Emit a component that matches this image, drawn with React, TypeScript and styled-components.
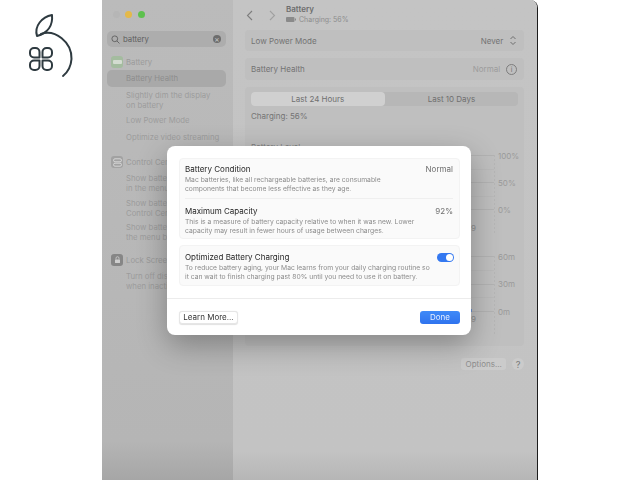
import React from 'react';
import styled, { createGlobalStyle } from 'styled-components';

const GlobalStyle = createGlobalStyle`
  html, body {
    margin: 0;
    padding: 0;
    width: 640px;
    height: 480px;
    overflow: hidden;
    background: #fff;
    font-family: Inter, "Liberation Sans", sans-serif;
  }
  * { box-sizing: border-box; }
`;

const sidebarGroups = [
  {
    title: 'Battery',
    tint: '#a4bc9f',
    glyph: 'battery',
    items: [
      { label: 'Battery Health', active: true },
      { label: 'Slightly dim the display\non battery' },
      { label: 'Low Power Mode' },
      { label: 'Optimize video streaming' },
    ],
  },
  {
    title: 'Control Center',
    tint: '#a2a2a2',
    glyph: 'control',
    items: [
      { label: 'Show battery\nin the menu bar' },
      { label: 'Show battery\nControl Center' },
      { label: 'Show battery\nthe menu bar' },
    ],
  },
  {
    title: 'Lock Screen',
    tint: '#868686',
    glyph: 'lock',
    items: [{ label: 'Turn off display\nwhen inactive' }],
  },
];

export default function App() {
  return (
    <Page>
      <GlobalStyle />
      <Gutter>
        <Logo viewBox="0 0 102 100" aria-label="logo">
          <path d="M37 36C34 26 42 17 52 15C53 25 48 33 37 36Z" />
          <path d="M41 34C55 29 72 42 71.500 59C71 66 68 72 63 76" />
          <path d="M39.500 57.500H34a4 4 0 0 1-4-4v-1.500a4 4 0 0 1 4-4h1.500a4 4 0 0 1 4 4Z" />
          <path d="M42.500 57.500H48a4 4 0 0 0 4-4v-1.500a4 4 0 0 0-4-4h-1.500a4 4 0 0 0-4 4Z" />
          <path d="M39.500 60.500H34a4 4 0 0 0-4 4v1.500a4 4 0 0 0 4 4h1.500a4 4 0 0 0 4-4Z" />
          <path d="M42.500 60.500H48a4 4 0 0 1 4 4v1.500a4 4 0 0 1-4 4h-1.500a4 4 0 0 1-4-4Z" />
        </Logo>
      </Gutter>
      <Window>
        <Sidebar>
          <Traffic>
            <Light $color="#b6b6b6" />
            <Light $color="#e4b949" />
            <Light $color="#5dc14e" />
          </Traffic>
          <Search>
            <svg width="9" height="9" viewBox="0 0 10 10" fill="none" stroke="#606060" strokeWidth="1">
              <circle cx="4.200" cy="4.200" r="3.200" />
              <path d="M6.600 6.600L9.400 9.400" />
            </svg>
            <SearchText>battery</SearchText>
            <ClearDot>×</ClearDot>
          </Search>
          {sidebarGroups.map((group) => (
            <SideGroup key={group.title}>
              <SideHead>
                <SideIcon $tint={group.tint}>
                  {group.glyph === 'battery' && <BatteryBar />}
                  {group.glyph === 'control' && (
                    <svg width="9" height="9" viewBox="0 0 9 9" fill="none" stroke="#d6d6d6" strokeWidth="1">
                      <rect x="0.500" y="0.800" width="8" height="3" rx="1.500" />
                      <rect x="0.500" y="5.200" width="8" height="3" rx="1.500" />
                    </svg>
                  )}
                  {group.glyph === 'lock' && (
                    <svg width="9" height="9" viewBox="0 0 9 9">
                      <path d="M3 3.500V2.200a1.500 1.500 0 0 1 3 0V3.500" fill="none" stroke="#cfcfcf" strokeWidth="0.800" />
                      <rect x="2" y="3.500" width="5" height="3.500" rx="0.600" fill="#cfcfcf" />
                    </svg>
                  )}
                </SideIcon>
                {group.title}
              </SideHead>
              {group.items.map((item) => (
                <SideItem key={item.label} $active={item.active}>
                  {item.label}
                </SideItem>
              ))}
            </SideGroup>
          ))}
        </Sidebar>
        <Main>
          <Header>
            <NavButtons>
              <svg width="8" height="11" viewBox="0 0 8 11" fill="none" stroke="#7d7d7d" strokeWidth="1.100">
                <path d="M6 1L1.500 5.500L6 10" />
              </svg>
              <svg width="8" height="11" viewBox="0 0 8 11" fill="none" stroke="#a0a0a0" strokeWidth="1.100">
                <path d="M2 1L6.500 5.500L2 10" />
              </svg>
            </NavButtons>
            <HeaderText>
              <HeaderTitle>Battery</HeaderTitle>
              <HeaderSub>
                <svg width="10" height="5" viewBox="0 0 10 5">
                  <rect x="0" y="0" width="8.500" height="5" rx="1" fill="#8a8a8a" />
                  <rect x="9" y="1.500" width="1" height="2" fill="#8a8a8a" />
                </svg>
                Charging: 56%
              </HeaderSub>
            </HeaderText>
          </Header>
          <SettingRow $height={21}>
            <RowLabel>Low Power Mode</RowLabel>
            <RowValue>
              Never
              <Stepper viewBox="0 0 8 11" fill="none" stroke="#6f6f6f" strokeWidth="1">
                <path d="M1.500 4L4 1.500L6.500 4M1.500 7L4 9.500L6.500 7" />
              </Stepper>
            </RowValue>
          </SettingRow>
          <SettingRow $height={22}>
            <RowLabel>Battery Health</RowLabel>
            <RowValue $muted>
              Normal
              <InfoCircle>i</InfoCircle>
            </RowValue>
          </SettingRow>
          <ChartCard>
            <Segments>
              <Segment $active>Last 24 Hours</Segment>
              <Segment>Last 10 Days</Segment>
            </Segments>
            <ChargingLabel>Charging: 56%</ChargingLabel>
            <ChartTitle>Battery Level</ChartTitle>
            <Chart>
              <ChartLine>100%</ChartLine>
              <ChartLine $minor />
              <ChartLine>50%</ChartLine>
              <ChartLine $minor />
              <ChartLine>0%</ChartLine>
              <AxisLabel $top={13}>9</AxisLabel>
            </Chart>
            <Chart>
              <ChartLine>60m</ChartLine>
              <ChartLine $minor />
              <ChartLine>30m</ChartLine>
              <ChartLine $minor />
              <ChartLine>0m</ChartLine>
              <ChartBar />
              <AxisLabel $top={2}>9</AxisLabel>
            </Chart>
          </ChartCard>
          <Footer>
            <GhostButton>Options...</GhostButton>
            <HelpButton>?</HelpButton>
          </Footer>
        </Main>
        <Modal>
          <ModalBody>
            <InfoGroup>
              <InfoRow $pad="4px 0 5px">
                <InfoText>
                  <InfoTitle>Battery Condition</InfoTitle>
                  <InfoDesc>
                    Mac batteries, like all rechargeable batteries, are consumable
                    <br />
                    components that become less effective as they age.
                  </InfoDesc>
                </InfoText>
                <InfoValue>Normal</InfoValue>
              </InfoRow>
              <InfoDivider />
              <InfoRow $pad="6px 0 3px">
                <InfoText>
                  <InfoTitle>Maximum Capacity</InfoTitle>
                  <InfoDesc>
                    This is a measure of battery capacity relative to when it was new. Lower
                    <br />
                    capacity may result in fewer hours of usage between charges.
                  </InfoDesc>
                </InfoText>
                <InfoValue>92%</InfoValue>
              </InfoRow>
            </InfoGroup>
            <InfoGroup>
              <InfoRow $pad="5px 0 4px">
                <InfoText>
                  <InfoTitle>Optimized Battery Charging</InfoTitle>
                  <InfoDesc>
                    To reduce battery aging, your Mac learns from your daily charging routine so
                    <br />
                    it can wait to finish charging past 80% until you need to use it on battery.
                  </InfoDesc>
                </InfoText>
                <Toggle>
                  <ToggleKnob />
                </Toggle>
              </InfoRow>
            </InfoGroup>
          </ModalBody>
          <ModalFooter>
            <LearnButton>Learn More...</LearnButton>
            <DoneButton>Done</DoneButton>
          </ModalFooter>
        </Modal>
      </Window>
    </Page>
  );
}

const Page = styled.div`
  display: flex;
  width: 640px;
  height: 480px;
  background: #fff;
`;

const Gutter = styled.div`
  width: 102px;
  height: 100px;
`;

const Logo = styled.svg`
  display: block;
  width: 102px;
  height: 100px;
  fill: none;
  stroke: #2e3a40;
  stroke-width: 2;
  stroke-linecap: round;
  stroke-linejoin: round;
`;

const Window = styled.div`
  position: relative;
  display: flex;
  width: 436px;
  height: 480px;
  border-right: 1px solid #1c1c1c;
  border-top-right-radius: 8px;
  overflow: hidden;
`;

const Sidebar = styled.div`
  width: 131px;
  padding: 8px 7px 0 5px;
  background: linear-gradient(#bbbbbb, #b5b5b5 92%, #a6a6a6);
  color: #9a9a9a;
  font-size: 7.750px;
  flex-shrink: 0;
`;

const Traffic = styled.div`
  display: flex;
  gap: 5.300px;
  height: 13px;
  padding-left: 6px;
  align-items: center;
  margin-bottom: 10px;
`;

const Light = styled.span<{ $color: string }>`
  width: 7px;
  height: 7px;
  border-radius: 50%;
  background: ${(p) => p.$color};
`;

const Search = styled.div`
  display: flex;
  align-items: center;
  gap: 3px;
  height: 16px;
  padding: 0 5px 0 4px;
  border-radius: 5px;
  background: #adadad;
  margin-bottom: 7px;
`;

const SearchText = styled.span`
  flex: 1;
  color: #5f5f5f;
`;

const ClearDot = styled.span`
  width: 8px;
  height: 8px;
  border-radius: 50%;
  background: #6d6d6d;
  color: #c9c9c9;
  font-size: 8px;
  line-height: 8px;
  text-align: center;
`;

const SideGroup = styled.div`
  margin-bottom: 8.500px;
`;

const SideHead = styled.div`
  display: flex;
  align-items: center;
  gap: 3px;
  height: 16px;
  padding-left: 4px;
`;

const SideIcon = styled.span<{ $tint: string }>`
  display: flex;
  align-items: center;
  justify-content: center;
  width: 12px;
  height: 12px;
  border-radius: 3px;
  background: ${(p) => p.$tint};
`;

const BatteryBar = styled.span`
  width: 9px;
  height: 4px;
  border-radius: 1px;
  background: #d3dcd0;
`;

const SideItem = styled.div<{ $active?: boolean }>`
  padding: 3px 0 1.500px 19px;
  min-height: 17px;
  border-radius: 5px;
  line-height: 10px;
  white-space: pre-line;
  background: ${(p) => (p.$active ? '#a9a9a9' : 'transparent')};
  color: ${(p) => (p.$active ? '#8d8d8d' : '#9c9c9c')};
`;

const Main = styled.div`
  flex: 1;
  display: flex;
  flex-direction: column;
  padding: 0 13px 0 12px;
  background: linear-gradient(#c4c4c4, #c3c3c3 94%, #b6b6b6);
  color: #707070;
  font-size: 8px;
`;

const Header = styled.div`
  display: flex;
  align-items: center;
  height: 30px;
`;

const NavButtons = styled.div`
  display: flex;
  gap: 14px;
  width: 41px;
  padding-left: 1px;
`;

const HeaderText = styled.div`
  display: flex;
  flex-direction: column;
  gap: 1px;
  margin-top: -1px;
`;

const HeaderTitle = styled.div`
  font-weight: 600;
  line-height: 9px;
  color: #6e6e6e;
`;

const HeaderSub = styled.div`
  display: flex;
  align-items: center;
  gap: 3px;
  font-size: 7px;
  line-height: 9px;
  color: #8d8d8d;
`;

const SettingRow = styled.div<{ $height: number }>`
  display: flex;
  align-items: center;
  justify-content: space-between;
  height: ${(p) => p.$height}px;
  margin-bottom: 7px;
  padding: 0 7px 0 6px;
  border-radius: 4px;
  background: #bfbfbf;
`;

const RowLabel = styled.span`
  color: #737373;
`;

const RowValue = styled.span<{ $muted?: boolean }>`
  display: flex;
  align-items: center;
  gap: 6px;
  color: ${(p) => (p.$muted ? '#9c9c9c' : '#737373')};
`;

const Stepper = styled.svg`
  width: 8px;
  height: 11px;
`;

const InfoCircle = styled.span`
  display: flex;
  align-items: center;
  justify-content: center;
  width: 11px;
  height: 11px;
  border: 1px solid #7d7d7d;
  border-radius: 50%;
  font-size: 7px;
  color: #737373;
`;

const ChartCard = styled.div`
  height: 259px;
  padding: 5px 6px 0;
  border-radius: 4px;
  background: #bfbfbf;
`;

const Segments = styled.div`
  display: flex;
  height: 14px;
  border-radius: 4px;
  background: #b7b7b7;
`;

const Segment = styled.div<{ $active?: boolean }>`
  flex: 1;
  display: flex;
  align-items: center;
  justify-content: center;
  border-radius: 4px;
  color: #6f6f6f;
  background: ${(p) => (p.$active ? '#d0d0d0' : 'transparent')};
`;

const ChargingLabel = styled.div`
  margin-top: 5px;
  line-height: 10px;
  color: #747474;
`;

const ChartTitle = styled.div`
  margin-top: 21px;
  line-height: 10px;
  color: #808080;
`;

const Chart = styled.div`
  position: relative;
  display: flex;
  flex-direction: column;
  gap: 12.750px;
  height: 78px;
  margin: 3px -1px 23px 0;
  background: repeating-linear-gradient(#b6b6b6 0 2px, #bfbfbf 2px 4px) 243px 0 / 1px 100% no-repeat;
`;

const ChartLine = styled.div<{ $minor?: boolean }>`
  display: flex;
  align-items: center;
  height: 1px;
  padding-left: 247px;
  background: linear-gradient(
      ${(p) => (p.$minor ? '#bababa' : '#b3b3b3')},
      ${(p) => (p.$minor ? '#bababa' : '#b3b3b3')}
    )
    0 0 / 243px 1px no-repeat;
  color: #9a9a9a;
`;

const ChartBar = styled.span`
  position: absolute;
  left: 219px;
  top: 53px;
  width: 2px;
  height: 3px;
  background: #6f93d0;
`;

const AxisLabel = styled.div<{ $top: number }>`
  margin-top: ${(p) => p.$top - 13}px;
  padding-left: 220px;
  color: #8f8f8f;
  line-height: 10px;
`;

const Footer = styled.div`
  display: flex;
  justify-content: flex-end;
  align-items: center;
  gap: 6px;
  margin-top: 12px;
`;

const GhostButton = styled.div`
  display: flex;
  align-items: center;
  justify-content: center;
  width: 45px;
  height: 12px;
  border-radius: 3px;
  background: #cbcbcb;
  color: #8e8e8e;
`;

const HelpButton = styled.div`
  display: flex;
  align-items: center;
  justify-content: center;
  width: 12px;
  height: 12px;
  border-radius: 50%;
  background: #cbcbcb;
  color: #7e7e7e;
  font-size: 9px;
  font-weight: 500;
`;

const Modal = styled.div`
  position: absolute;
  top: 146px;
  left: 65px;
  width: 304px;
  height: 189px;
  border-radius: 8px;
  background: #fff;
  box-shadow: 0 10px 30px rgba(0, 0, 0, 0.3);
  display: flex;
  flex-direction: column;
  will-change: transform;
`;

const ModalBody = styled.div`
  flex: 1;
  display: flex;
  flex-direction: column;
  gap: 6px;
  padding: 12px 11px 0 12px;
`;

const InfoGroup = styled.div`
  padding: 0 6px 0 5px;
  border: 1px solid #f3f3f3;
  border-radius: 4px;
  background: #fafafa;
`;

const InfoRow = styled.div<{ $pad: string }>`
  display: flex;
  justify-content: space-between;
  padding: ${(p) => p.$pad};
`;

const InfoText = styled.div`
  display: flex;
  flex-direction: column;
`;

const InfoTitle = styled.div`
  font-size: 8px;
  line-height: 12px;
  color: #262626;
`;

const InfoDesc = styled.div`
  font-size: 6.750px;
  line-height: 9px;
  white-space: nowrap;
  color: #8c8c8c;
`;

const InfoValue = styled.div`
  font-size: 8px;
  line-height: 12px;
  color: #6f6f6f;
`;

const InfoDivider = styled.div`
  height: 1px;
  background: #efefef;
`;

const Toggle = styled.div`
  display: flex;
  justify-content: flex-end;
  align-items: center;
  width: 17px;
  height: 9px;
  padding-right: 1px;
  margin: 2px -1px 0 0;
  border-radius: 5px;
  background: #3478f0;
`;

const ToggleKnob = styled.span`
  width: 7px;
  height: 7px;
  border-radius: 50%;
  background: #fff;
`;

const ModalFooter = styled.div`
  display: flex;
  justify-content: space-between;
  align-items: center;
  height: 37px;
  padding: 0 11px 0 12px;
  border-top: 1px solid #ececec;
`;

const LearnButton = styled.div`
  display: flex;
  align-items: center;
  justify-content: center;
  width: 59px;
  height: 13px;
  border-radius: 3px;
  background: #fff;
  border: 1px solid #e6e6e6;
  box-shadow: 0 0.500px 1px rgba(0, 0, 0, 0.12);
  color: #333;
  font-size: 8px;
`;

const DoneButton = styled.div`
  display: flex;
  align-items: center;
  justify-content: center;
  width: 40px;
  height: 13px;
  border-radius: 3px;
  background: linear-gradient(#3f8af8, #2f73ee);
  color: #e8f0ff;
  font-size: 8px;
`;
